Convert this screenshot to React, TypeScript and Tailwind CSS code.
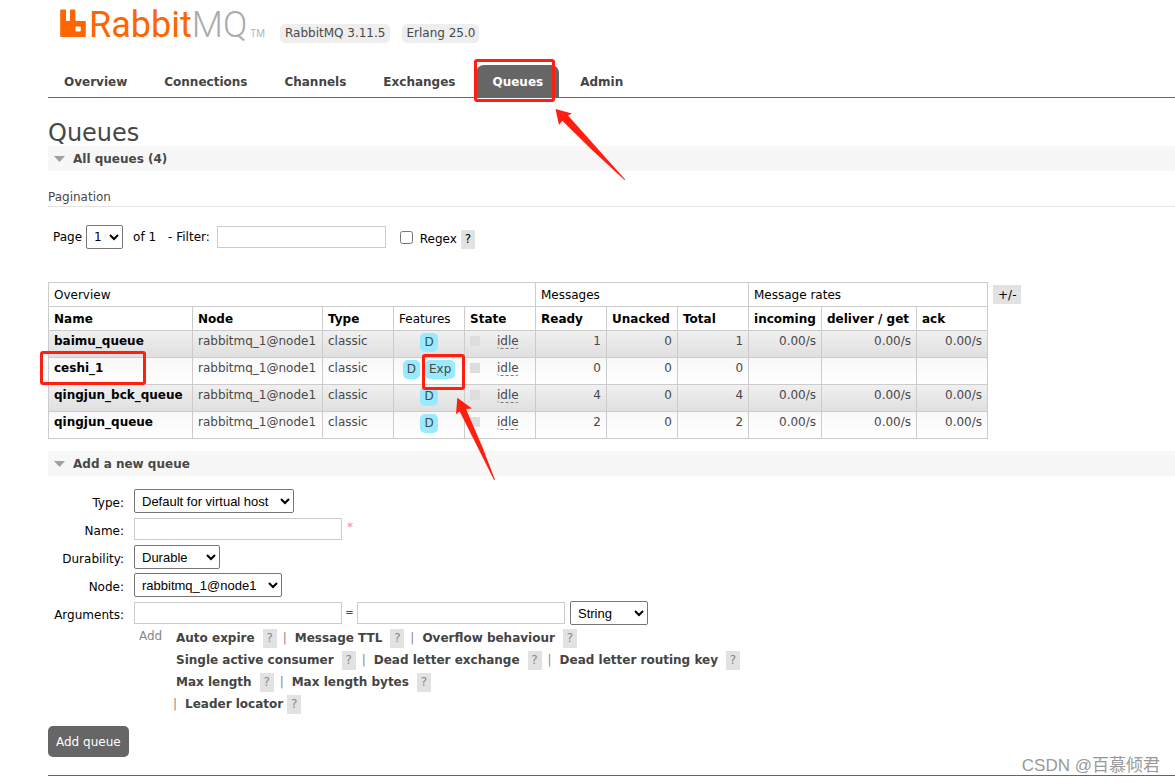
import React, { useState } from "react";

const tabs = ["Overview", "Connections", "Channels", "Exchanges", "Queues", "Admin"];

type Queue = {
  name: string;
  features: string[];
  ready: number;
  unacked: number;
  total: number;
  rate: string;
};

const queues: Queue[] = [
  { name: "baimu_queue", features: ["D"], ready: 1, unacked: 0, total: 1, rate: "0.00/s" },
  { name: "ceshi_1", features: ["D", "Exp"], ready: 0, unacked: 0, total: 0, rate: "" },
  { name: "qingjun_bck_queue", features: ["D"], ready: 4, unacked: 0, total: 4, rate: "0.00/s" },
  { name: "qingjun_queue", features: ["D"], ready: 2, unacked: 0, total: 2, rate: "0.00/s" },
];

const argumentRows: string[][] = [
  ["Auto expire", "Message TTL", "Overflow behaviour"],
  ["Single active consumer", "Dead letter exchange", "Dead letter routing key"],
  ["Max length", "Max length bytes"],
];

const cell = "border border-[#ccc] px-[5px]";
const bodyCell = "border border-[#ccc] px-[5px] pt-px";
const selectBase =
  "rounded-[2px] border border-[#767676] bg-white px-[3px] font-['Liberation_Sans',sans-serif] text-[13px] text-black";
const inputBase = "h-[22px] border border-[#ccc] bg-white px-1";

function Logo() {
  return (
    <a href="#" aria-label="RabbitMQ" className="flex h-12 items-start pl-3">
      <svg width="26" height="28" viewBox="0 0 26 28" className="mt-[9px] shrink-0" fill="#f60">
        <path
          fillRule="evenodd"
          d="M1.2 0.4H5Q6 0.4 6 1.4V10.9Q6 11.9 7 11.9H9Q10 11.9 10 10.9V1.4Q10 0.4 11 0.4H14.4Q15.4 0.4 15.4 1.4V10.9Q15.4 11.9 16.4 11.9H24.8Q25.8 11.9 25.8 12.9V27Q25.8 28 24.8 28H1.2Q0.2 28 0.2 27V1.4Q0.2 0.4 1.2 0.4ZM16.4 17.4Q15.4 17.4 15.4 18.4V21.6Q15.4 22.6 16.4 22.6H19.8Q20.8 22.6 20.8 21.6V18.4Q20.8 17.4 19.8 17.4Z"
        />
      </svg>
      <span className="ml-[3px] font-[Roboto,sans-serif] text-[36px] leading-[50px] text-[#f60]">
        Rabbit<span className="font-light text-[#acacac]">MQ</span>
      </span>
      <span className="mt-7 ml-[3px] font-[Roboto,sans-serif] text-[10px] leading-3 text-[#b5b5b5]">TM</span>
    </a>
  );
}

function Help() {
  return (
    <button
      type="button"
      aria-label="Help"
      className="flex h-[19px] w-3.5 shrink-0 items-center justify-center bg-[#e2e2e2]"
    >
      ?
    </button>
  );
}

function Section({ title, children }: { title: string; children: React.ReactNode }) {
  const [open, setOpen] = useState(true);
  return (
    <section>
      <h2>
        <button
          type="button"
          aria-expanded={open}
          onClick={() => setOpen(!open)}
          className="flex h-[25px] w-full items-center gap-2 bg-[#f7f7f7] pl-1.5 font-bold"
        >
          <svg width="11" height="6" viewBox="0 0 11 6" fill="#a0a0a0">
            <path d="M0 0H11L5.5 6Z" />
          </svg>
          {title}
        </button>
      </h2>
      {open && children}
    </section>
  );
}

function Arg({ name }: { name: string }) {
  return (
    <>
      <a href="#" className="mr-2 font-bold text-[#444]">
        {name}
      </a>
      <Help />
    </>
  );
}

function FormRow({ id, label, children }: { id: string; label: string; children: React.ReactNode }) {
  return (
    <div className="flex h-7 items-center">
      <label htmlFor={id} className="mr-2.5 w-[76px] shrink-0 pt-1 text-right text-black">
        {label}
      </label>
      {children}
    </div>
  );
}

export default function App() {
  return (
    <div className="relative overflow-hidden bg-white pb-[7px] pl-12 font-['DejaVu_Sans',Verdana,sans-serif] text-[12px] leading-[18px] text-[#484848]">
      <header>
        <div className="flex items-start">
          <Logo />
          <div className="mt-6 ml-[15px] flex gap-3">
            <span className="rounded-[5px] bg-[#eee] px-[5px] leading-[19px]">RabbitMQ 3.11.5</span>
            <span className="rounded-[5px] bg-[#eee] px-1 leading-[19px]">Erlang 25.0</span>
          </div>
        </div>
        <nav className="mt-[17px] flex h-[33px] gap-[5px] border-b border-[#666] font-bold">
          {tabs.map((tab) =>
            tab === "Queues" ? (
              <div key={tab} className="relative">
                <a href="#" aria-current="page" className="block h-full rounded-t-lg bg-[#666] px-4 pt-2 text-white">
                  {tab}
                </a>
                <div className="pointer-events-none absolute -top-1.5 -left-0.5 h-[43px] w-[81px] rounded-[3px] border-3 border-[#ff1e10]" />
                <svg
                  className="pointer-events-none absolute top-11 left-[79px]"
                  width="71"
                  height="72"
                  viewBox="555 109 71 72"
                  fill="#ff1e10"
                >
                  <path d="M555.5 109L572 113.5L568 115.5L597 148L625.2 179.5L624.5 180L592 150L562.3 120.7L559 125Z" />
                </svg>
              </div>
            ) : (
              <a key={tab} href="#" className="px-4 pt-2 text-[#444]">
                {tab}
              </a>
            ),
          )}
        </nav>
      </header>

      <main>
        <h1 className="mt-[22px] text-[24px] leading-[26px]">Queues</h1>
        <Section title="All queues (4)">
          <h3 className="mt-[17px] border-b border-[#e4e4e4]">Pagination</h3>
          <div className="mt-[18px] flex h-6 items-center pl-[5px] text-black">
            <label htmlFor="page">Page</label>
            <select
              id="page"
              className="ml-1 h-6 w-[37px] rounded-[2px] border border-[#767676] bg-white pl-[3px] text-[12px]"
            >
              <option>1</option>
            </select>
            <span className="ml-2.5">of 1</span>
            <label htmlFor="filter" className="ml-3">
              - Filter:
            </label>
            <input id="filter" type="text" className={`${inputBase} ml-[7px] w-[169px]`} />
            <input id="regex" type="checkbox" className="ml-3.5 h-[13px] w-[13px]" />
            <label htmlFor="regex" className="mt-1 mr-1 ml-[7px]">
              Regex
            </label>
            <div className="mt-1 flex">
              <Help />
            </div>
          </div>

          <div className="mt-[33px] mb-3 flex items-start gap-[5px]">
            <table className="w-[940px] table-fixed border-collapse">
              <colgroup>
                <col className="w-[144px]" />
                <col className="w-[130px]" />
                <col className="w-[71px]" />
                <col className="w-[71px]" />
                <col className="w-[71px]" />
                <col className="w-[71px]" />
                <col className="w-[71px]" />
                <col className="w-[71px]" />
                <col className="w-[73px]" />
                <col className="w-[95px]" />
                <col className="w-[71px]" />
              </colgroup>
              <thead className="text-left whitespace-nowrap text-black">
                <tr className="h-6">
                  <th colSpan={5} className={`${cell} font-normal`}>Overview</th>
                  <th colSpan={3} className={`${cell} font-normal`}>Messages</th>
                  <th colSpan={3} className={`${cell} font-normal`}>Message rates</th>
                </tr>
                <tr className="h-6">
                  <th className={cell}>Name</th>
                  <th className={cell}>Node</th>
                  <th className={cell}>Type</th>
                  <th className={`${cell} font-normal`}>Features</th>
                  <th className={cell}>State</th>
                  <th className={cell}>Ready</th>
                  <th className={cell}>Unacked</th>
                  <th className={cell}>Total</th>
                  <th className={cell}>incoming</th>
                  <th className={cell}>deliver / get</th>
                  <th className={cell}>ack</th>
                </tr>
              </thead>
              <tbody className="align-top whitespace-nowrap">
                {queues.map((q) => (
                  <tr
                    key={q.name}
                    className="h-[27px] odd:bg-linear-to-b odd:from-[#f0f0f0] odd:to-[#dfdfdf] even:bg-linear-to-b even:from-[#f8f8f8] even:to-white"
                  >
                    <td className={`${bodyCell} relative`}>
                      <a href="#" className="font-bold text-black">
                        {q.name}
                      </a>
                      {q.name === "ceshi_1" && (
                        <div className="pointer-events-none absolute -top-[7px] -left-[9px] h-[34px] w-[106px] rounded-[3px] border-3 border-[#ff1e10]" />
                      )}
                    </td>
                    <td className={bodyCell}>rabbitmq_1@node1</td>
                    <td className={bodyCell}>classic</td>
                    <td className={`${bodyCell} relative`}>
                      <div className="flex justify-center gap-[5px] pt-px">
                        {q.features.map((f) => (
                          <abbr key={f} className="rounded-[5px] bg-[#98ebff] px-1 leading-[19px] no-underline">
                            {f}
                          </abbr>
                        ))}
                      </div>
                      {q.name === "ceshi_1" && (
                        <>
                          <div className="pointer-events-none absolute -top-1 left-7 z-10 h-9 w-[43px] rounded-[3px] border-3 border-[#ff1e10]" />
                          <svg
                            className="pointer-events-none absolute top-[39px] left-[62px] z-10"
                            width="40"
                            height="84"
                            viewBox="456 397 40 84"
                            fill="#ff1e10"
                          >
                            <path d="M457.3 397.7L472 408.5L466 409L482 446L495 479.7L494 480L477 446L459.6 411.3L456 414.5Z" />
                          </svg>
                        </>
                      )}
                    </td>
                    <td className={bodyCell}>
                      <div className="flex items-start gap-[17px] pt-[3px]">
                        <span className="mt-px h-2.5 w-2.5 bg-[#ddd]" />
                        <abbr className="rounded-[3px] border-b border-dashed border-[#777] leading-[13px] no-underline">
                          idle
                        </abbr>
                      </div>
                    </td>
                    <td className={`${bodyCell} text-right`}>{q.ready}</td>
                    <td className={`${bodyCell} text-right`}>{q.unacked}</td>
                    <td className={`${bodyCell} text-right`}>{q.total}</td>
                    <td className={`${bodyCell} text-right`}>{q.rate}</td>
                    <td className={`${bodyCell} text-right`}>{q.rate}</td>
                    <td className={`${bodyCell} text-right`}>{q.rate}</td>
                  </tr>
                ))}
              </tbody>
            </table>
            <button type="button" className="mt-[3px] h-[19px] bg-[#e2e2e2] px-[5px] text-black">
              +/-
            </button>
          </div>
        </Section>

        <Section title="Add a new queue">
          <form onSubmit={(e) => e.preventDefault()} className="pt-[11px]">
            <FormRow id="type" label="Type:">
              <select id="type" className={`${selectBase} h-6 w-40`}>
                <option>Default for virtual host</option>
              </select>
            </FormRow>
            <FormRow id="name" label="Name:">
              <input id="name" type="text" className={`${inputBase} w-52`} />
              <span className="mb-1 ml-[5px] text-[#f88]">*</span>
            </FormRow>
            <FormRow id="durability" label="Durability:">
              <select id="durability" className={`${selectBase} h-6 w-[86px]`}>
                <option>Durable</option>
              </select>
            </FormRow>
            <FormRow id="node" label="Node:">
              <select id="node" className={`${selectBase} h-6 w-[148px]`}>
                <option>rabbitmq_1@node1</option>
              </select>
            </FormRow>
            <FormRow id="argument-key" label="Arguments:">
              <input id="argument-key" type="text" className={`${inputBase} w-52`} />
              <span className="w-[15px] text-center text-[10px]">=</span>
              <input aria-label="Argument value" type="text" className={`${inputBase} w-52`} />
              <select aria-label="Argument type" className={`${selectBase} ml-[5px] h-6 w-[78px]`}>
                <option>String</option>
              </select>
            </FormRow>

            <div className="flex pl-[91px] text-[#888]">
              <span className="w-[37px]">Add</span>
              <div>
                {argumentRows.map((row) => (
                  <div key={row[0]} className="flex h-[22px] items-center">
                    {row.map((name, i) => (
                      <React.Fragment key={name}>
                        {i > 0 && <span className="mr-2 ml-1.5">|</span>}
                        <Arg name={name} />
                      </React.Fragment>
                    ))}
                  </div>
                ))}
                <div className="-ml-[3px] flex h-[22px] items-center">
                  <span className="mr-2">|</span>
                  <a href="#" className="mr-1 font-bold text-[#444]">
                    Leader locator
                  </a>
                  <Help />
                </div>
              </div>
            </div>
            <button type="submit" className="mt-[11px] h-[31px] rounded-[5px] bg-[#666] px-2 text-white">
              Add queue
            </button>
          </form>
        </Section>
      </main>
      <footer className="mt-[18px] border-t border-[#666]" />
      <div className="pointer-events-none absolute right-[15px] bottom-[5px] font-['Liberation_Sans','Noto_Sans_CJK_SC',sans-serif] text-[17px] leading-6 text-[#999]">
        CSDN @百慕倾君
      </div>
    </div>
  );
}
